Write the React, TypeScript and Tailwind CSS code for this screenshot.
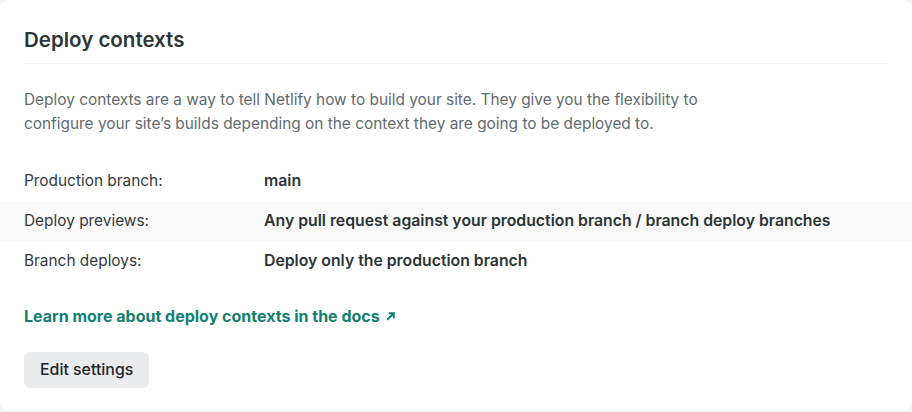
import React from "react";

export default function App() {
  const rows = [
    { label: "Production branch:", value: "main" },
    { label: "Deploy previews:", value: "Any pull request against your production branch / branch deploy branches" },
    { label: "Branch deploys:", value: "Deploy only the production branch" },
  ];
  return (
    <div className="w-[912px] h-[412px] bg-[#f5f6f7]" style={{ fontFamily: "Inter, 'Noto Sans', sans-serif" }}>
      <div className="w-[912px] h-[410px] bg-white rounded-lg">
        <div className="px-6 pt-[26px]">
          <h2 className="text-[20.5px] leading-[28px] font-semibold text-[#2b3538] pb-[9px] border-b border-[#f2f3f4]">Deploy contexts</h2>
          <p className="mt-[24px] text-[15.4px] leading-[24px] text-[#5f6b70] w-[720px]">
            Deploy contexts are a way to tell Netlify how to build your site. They give you the flexibility to configure your site’s builds depending on the context they are going to be deployed to.
          </p>
        </div>
        <div className="mt-[25px]">
          {rows.map((r, i) => (
            <div key={i} className={`flex items-center h-[40px] px-6 text-[15.4px] ${i === 1 ? "bg-[#f9f9f9]" : ""}`}>
              <div className="w-[240px] text-[#323b40]">{r.label}</div>
              <div className="font-semibold text-[15.8px] text-[#2b3538]">{r.value}</div>
            </div>
          ))}
        </div>
        <div className="px-6 mt-[23px]">
          <a className="text-[16px] font-bold text-[#127f71] inline-flex items-center gap-[5px]">
            Learn more about deploy contexts in the docs
            <svg width="11" height="11" viewBox="0 0 10 10" fill="none" stroke="currentColor" strokeWidth="1.8">
              <path d="M2 8L8 2M3.5 2H8V6.5" />
            </svg>
          </a>
          <div className="mt-[24px]">
            <button className="h-[36px] px-4 rounded-md bg-[#e9ebed] text-[15.9px] font-medium text-[#1f262a]">Edit settings</button>
          </div>
        </div>
      </div>
    </div>
  );
}
